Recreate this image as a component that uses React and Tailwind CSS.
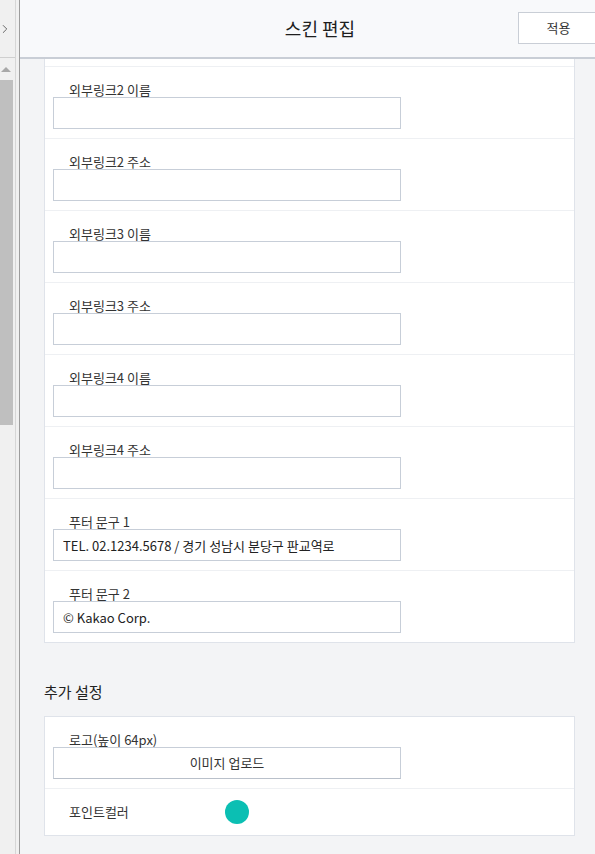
import { ChevronRight } from 'lucide-react'

const fields = [
  { label: '외부링크2 이름', value: '' },
  { label: '외부링크2 주소', value: '' },
  { label: '외부링크3 이름', value: '' },
  { label: '외부링크3 주소', value: '' },
  { label: '외부링크4 이름', value: '' },
  { label: '외부링크4 주소', value: '' },
  { label: '푸터 문구 1', value: 'TEL. 02.1234.5678 / 경기 성남시 분당구 판교역로' },
  { label: '푸터 문구 2', value: '© Kakao Corp.' },
]

function FieldRow({ label, value }) {
  return (
    <div className="h-[72px] border-t border-[#eef0f3] pt-[15px] pl-[8px]">
      <div className="pl-[16px] text-[13px] leading-[15px] text-[#333]">{label}</div>
      <input
        readOnly
        value={value}
        className="block w-[348px] h-8 border border-[#c7ced8] bg-white px-[9px] text-[13px] text-[#222] outline-none"
      />
    </div>
  )
}

export default function App() {
  return (
    <div
      className="flex h-[854px] w-[595px] overflow-hidden bg-[#f3f4f6]"
      style={{ fontFamily: '"Noto Sans CJK KR", "Noto Sans", sans-serif' }}
    >
      {/* left scroll strip */}
      <div className="flex shrink-0">
        <div className="flex w-[15px] flex-col bg-[#f0f0f0]">
          <div className="flex h-[58px] items-center border-b border-[#cfcfcf]">
            <ChevronRight className="h-[14px] w-[14px] -ml-[2px] text-[#555]" strokeWidth={1.5} />
          </div>
          <div className="flex h-[22px] items-center pl-[1px]">
            <div className="h-0 w-0 border-x-[5px] border-b-[5px] border-x-transparent border-b-[#a8a8a8]" />
          </div>
          <div className="h-[345px] w-[13px] bg-[#bfbfbf]" />
        </div>
        <div className="w-px bg-[#d6d6d6]" />
        <div className="w-[3px] bg-[#f0f0f0]" />
        <div className="w-px bg-[#9c9c9c]" />
      </div>

      {/* main */}
      <div className="flex flex-1 flex-col">
        <div className="relative flex h-[59px] shrink-0 items-center border-b-2 border-[#c9ced6] bg-[#f8f9fb]">
          <h1 className="w-full pl-[25px] text-center text-[18px] text-[#1e1e1e]">스킨 편집</h1>
          <button className="absolute right-[-4px] top-3 h-8 w-[81px] border border-[#c9ced6] bg-white text-[13px] text-[#333]">
            적용
          </button>
        </div>

        <div className="flex flex-col pl-6 pr-5">
          <div className="border-x border-b border-[#dfe3ea] bg-white">
            <div className="h-[7px]" />
            {fields.map(f => (
              <FieldRow key={f.label} label={f.label} value={f.value} />
            ))}
          </div>

          <h2 className="mt-[38px] mb-[13px] text-[15px] leading-[22px] text-[#222]">추가 설정</h2>

          <div className="border border-[#dfe3ea] bg-white">
            <div className="h-[71px] pt-[15px] pl-[8px]">
              <div className="pl-[16px] text-[13px] leading-[15px] text-[#333]">로고(높이 64px)</div>
              <button className="block h-8 w-[348px] border border-[#c7ced8] border-b-[#b9c0ca] bg-white text-[13px] text-[#333]">
                이미지 업로드
              </button>
            </div>
            <div className="flex h-[47px] items-center border-t border-[#eef0f3] pl-[24px]">
              <span className="w-[156px] text-[13px] text-[#333]">포인트컬러</span>
              <span className="h-6 w-6 rounded-full bg-[#0bbfb3]" />
            </div>
          </div>
        </div>
      </div>
    </div>
  )
}
